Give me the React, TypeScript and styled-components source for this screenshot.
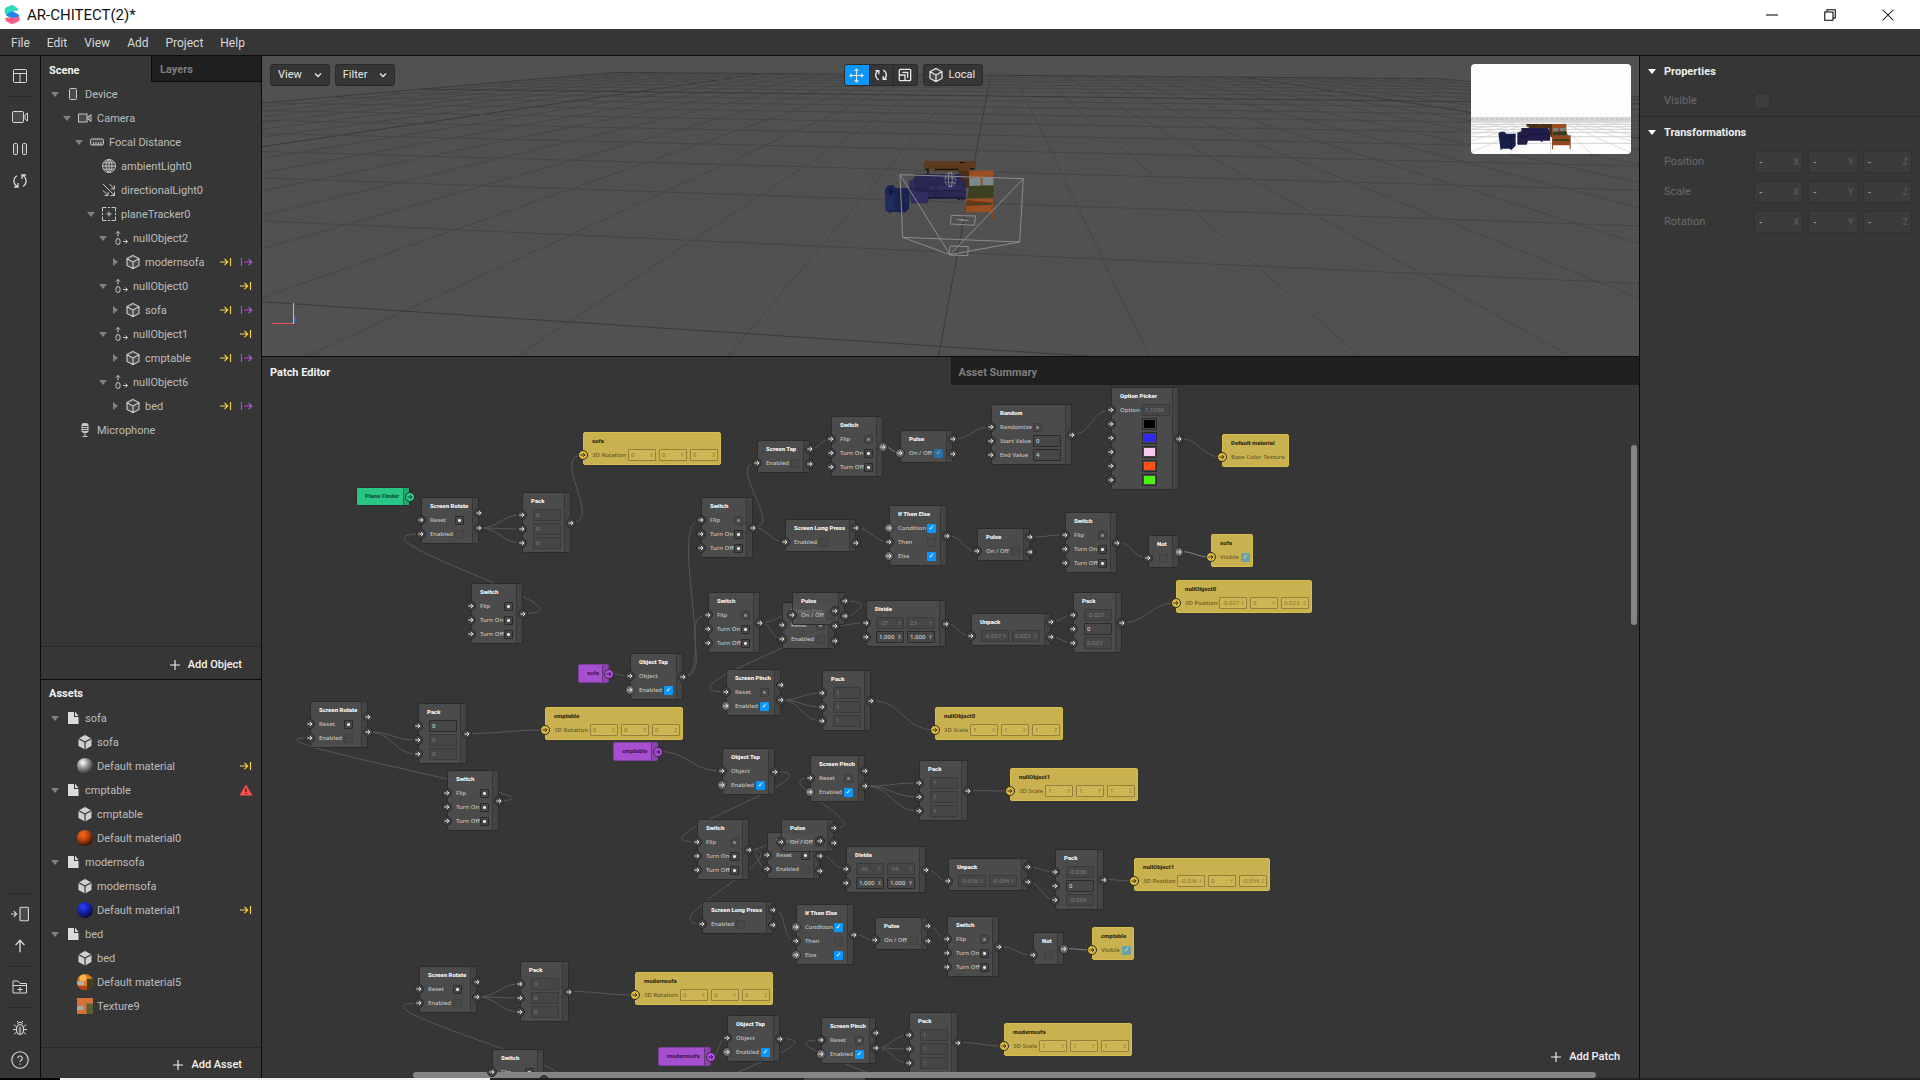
import React from "react";
import styled, { createGlobalStyle } from "styled-components";

const GlobalStyle = createGlobalStyle`
  * { box-sizing: border-box; }
  body { margin: 0; background: #363636; }
  button, input { font: inherit; color: inherit; margin: 0; padding: 0; }
  button { background: none; border: 0; cursor: pointer; }
`;

const c = {
  panel: "#363636",
  dark: "#1f1f1f",
  line: "#0c0c0c",
  soft: "#292929",
  text: "#bdbdbd",
  bright: "#ececec",
  dim: "#6b6b6b",
  yellow: "#f7cf46",
  purple: "#b04fe0",
  blue: "#0a96ff",
};

/* ---------- shell ---------- */

const Shell = styled.div`
  display: flex;
  flex-direction: column;
  height: 100vh;
  overflow: hidden;
  color: ${c.text};
  font: 11px/16px Roboto, "Liberation Sans", sans-serif;
`;

const TitleBar = styled.header`
  display: flex;
  align-items: center;
  flex: none;
  height: 29px;
  padding: 0 3px 0 4px;
  background: #fff;
  color: #111;
`;

const AppTitle = styled.h1`
  flex: 1;
  margin: 0 0 0 7px;
  font: 400 15px/20px Roboto, sans-serif;
`;

const WindowButton = styled.button`
  display: grid;
  place-items: center;
  width: 58px;
  height: 29px;
  color: #000;
`;

const MenuBar = styled.nav`
  display: flex;
  align-items: center;
  flex: none;
  gap: 17px;
  height: 27px;
  padding: 2px 0 0 11px;
  border-bottom: 1px solid ${c.line};
  color: #d8d8d8;
  font-size: 12px;
`;

const Workspace = styled.div`
  display: flex;
  flex: 1;
  min-height: 0;
`;

const Rail = styled.aside`
  display: flex;
  flex-direction: column;
  align-items: center;
  flex: none;
  width: 41px;
  padding: 4px 0 2px;
  border-right: 1px solid ${c.line};
  color: #d8d8d8;
`;

const RailButton = styled.button`
  display: grid;
  place-items: center;
  width: 32px;
  height: 32px;
`;

const RailLine = styled.hr`
  width: 24px;
  margin: 4px 0;
  border: 0;
  border-top: 1px solid #2a2a2a;
`;

const Spacer = styled.div`
  flex: 1;
`;

const Sidebar = styled.aside`
  display: flex;
  flex-direction: column;
  flex: none;
  width: 221px;
  border-right: 1px solid ${c.line};
`;

const SceneSection = styled.section`
  display: flex;
  flex-direction: column;
  height: 624px;
  border-bottom: 1px solid ${c.line};
`;

const AssetSection = styled.section`
  display: flex;
  flex-direction: column;
  flex: 1;
  min-height: 0;
`;

const Tabs = styled.div`
  display: flex;
  flex: none;
  height: 26px;
`;

const Tab = styled.button<{ $on?: boolean; $grow?: boolean }>`
  flex: ${(p) => (p.$grow ? "1" : "0 0 50%")};
  padding: 3px 8px 0;
  border: solid ${c.line};
  border-width: ${(p) => (p.$on ? "0" : "0 0 1px 1px")};
  background: ${(p) => (p.$on ? c.panel : c.dark)};
  color: ${(p) => (p.$on ? "#f2f2f2" : "#7e7e7e")};
  font-weight: 700;
  text-align: left;
`;

const SectionTitle = styled.h2`
  margin: 0;
  padding: 6px 8px 4px;
  color: #f2f2f2;
  font: 700 11px/16px Roboto, sans-serif;
`;

const List = styled.ul`
  flex: 1;
  margin: 0;
  padding: 0;
  list-style: none;
`;

const Row = styled.li<{ $depth: number }>`
  display: flex;
  align-items: center;
  height: 24px;
  padding: 0 8px 0 ${(p) => 8 + 12 * p.$depth}px;
`;

const Caret = styled.button<{ $open?: boolean }>`
  display: grid;
  place-items: center;
  width: 12px;
  height: 16px;
  margin-right: 4px;
  &::before {
    content: "";
    border: 4px solid transparent;
    ${(p) =>
      p.$open
        ? "border-top: 5px solid #808080; border-bottom: 0;"
        : "border-left: 5px solid #808080; border-right: 0;"}
  }
`;

const CaretGap = styled.span`
  width: 16px;
`;

const IconBox = styled.span`
  display: grid;
  place-items: center;
  width: 16px;
  height: 16px;
  margin-right: 4px;
  color: #c8c8c8;
`;

const Name = styled.span`
  flex: 1;
  padding-top: 2px;
  white-space: nowrap;
`;

const Marks = styled.span`
  display: flex;
  gap: 6px;
`;

const AddRow = styled.div<{ $tall?: boolean }>`
  display: flex;
  justify-content: flex-end;
  flex: none;
  height: ${(p) => (p.$tall ? 33 : 31)}px;
  padding: 3px 19px 0 0;
  border-top: 1px solid ${c.soft};
`;

const AddButton = styled.button`
  display: flex;
  align-items: center;
  gap: 8px;
  color: #f4f4f4;
  font-weight: 500;
`;

/* ---------- viewport ---------- */

const Center = styled.main`
  display: flex;
  flex-direction: column;
  flex: 1;
  min-width: 0;
`;

const Viewport = styled.section`
  position: relative;
  flex: none;
  height: 301px;
  overflow: hidden;
  border-bottom: 1px solid ${c.line};
  background: #515151;
`;

const SceneSvg = styled.svg`
  display: block;
  width: 100%;
  height: 100%;
`;

const Overlay = styled.div`
  position: absolute;
  inset: 8px;
  display: grid;
  grid-template-columns: calc(50% - 107px) auto 1fr auto;
  align-items: start;
  pointer-events: none;
`;

const Group = styled.div<{ $gap: number }>`
  display: flex;
  gap: ${(p) => p.$gap}px;
`;

const Drop = styled.button<{ $gap?: number }>`
  display: flex;
  align-items: center;
  gap: ${(p) => p.$gap ?? 12}px;
  height: 22px;
  padding: 0 7px 0 ${(p) => (p.$gap ? 4 : 7)}px;
  border: 1px solid #2a2a2a;
  border-radius: 3px;
  background: ${c.panel};
  color: #e8e8e8;
`;

const Tools = styled.div`
  display: flex;
  height: 22px;
  border: 1px solid #2a2a2a;
  border-radius: 3px;
  overflow: hidden;
  background: ${c.panel};
`;

const Tool = styled.button<{ $on?: boolean }>`
  display: grid;
  place-items: center;
  width: 24px;
  background: ${(p) => (p.$on ? c.blue : c.panel)};
  color: #e8e8e8;
  & + & {
    border-left: 1px solid #2a2a2a;
  }
`;

const Preview = styled.svg`
  grid-column: 4;
  width: 160px;
  height: 90px;
  border-radius: 4px;
  background: #fdfdfd;
`;

/* ---------- properties ---------- */

const Properties = styled.aside`
  flex: none;
  width: 281px;
  border-left: 1px solid ${c.line};
`;

const PropSection = styled.section`
  & + & {
    border-top: 1px solid #2b2b2b;
  }
`;

const PropTitle = styled.button`
  display: flex;
  align-items: center;
  gap: 8px;
  height: 30px;
  padding: 1px 0 0 8px;
  color: #ededed;
  font-weight: 700;
  &::before {
    content: "";
    border: 4px solid transparent;
    border-top: 5px solid #fff;
    border-bottom: 0;
  }
`;

const PropRow = styled.div`
  display: grid;
  grid-template-columns: 90px 1fr;
  align-items: center;
  height: 30px;
  padding: 0 8px 0 24px;
  color: ${c.dim};
`;

const PropFields = styled.div`
  display: grid;
  grid-template-columns: repeat(3, minmax(0, 1fr));
  gap: 5px;
`;

const PropField = styled.span`
  display: flex;
  align-items: center;
  height: 22px;
  padding: 0 3px 0 4px;
  border: 1px solid #303030;
  border-radius: 2px;
  background: #3b3b3b;
  color: #555;
  font-size: 9px;
  font-weight: 700;
`;

const PropInput = styled.input`
  flex: 1;
  width: 0;
  min-width: 0;
  border: 0;
  outline: 0;
  background: none;
  color: #9a9a9a;
`;

const PropCheck = styled.input`
  appearance: none;
  width: 16px;
  height: 16px;
  border: 1px solid #303030;
  border-radius: 3px;
  background: #3d3d3d;
`;

/* ---------- patch editor ---------- */

const Editor = styled.section`
  position: relative;
  flex: 1;
  min-height: 0;
  overflow: hidden;
`;

const EditorTabs = styled(Tabs)`
  height: 28px;
  & > button {
    border: 0;
  }
`;

const Wires = styled.svg`
  position: absolute;
  inset: 0;
  width: 100%;
  height: 100%;
  fill: none;
`;

type Tone = "grey" | "yellow" | "green" | "purple";

const tones = {
  grey: { body: "rgba(80,80,80,.82)", strip: "rgba(68,68,68,.9)", edge: "#2c2c2c", title: "#f4f4f4", text: "#c4c4c4", port: "#414141", arrow: "#e6e6e6" },
  yellow: { body: "#c9b150", strip: "#c9b150", edge: "#d8bd4e", title: "#352f14", text: "#665924", port: "#dbb93a", arrow: "#3a3418" },
  green: { body: "#28c584", strip: "#22a971", edge: "#2a2f2c", title: "#10543a", text: "#10543a", port: "#28cf8a", arrow: "#10402d" },
  purple: { body: "#a650cf", strip: "#8f43b3", edge: "#7e3d9c", title: "#45185b", text: "#45185b", port: "#b44fe4", arrow: "#36104a" },
};

const NodeBox = styled.article<{ $tone: Tone }>`
  position: absolute;
  display: flex;
  border: 1px solid ${(p) => tones[p.$tone].edge};
  border-radius: 2px;
  background: ${(p) => tones[p.$tone].body};
  color: ${(p) => tones[p.$tone].text};
  font: 500 6px/14px "Noto Sans", sans-serif;
  white-space: nowrap;
`;

const NodeBody = styled.div`
  flex: 1;
  min-width: 0;
  padding: 1px 0 2px;
`;

const NodeTitle = styled.h3<{ $tone: Tone }>`
  margin: 0;
  padding-left: 8px;
  color: ${(p) => tones[p.$tone].title};
  font: 900 6px/14px Roboto, sans-serif;
`;

const NodeRow = styled.div`
  display: flex;
  align-items: center;
  height: 14px;
`;

const NodeLabel = styled.label<{ $w: number }>`
  flex: none;
  width: ${(p) => p.$w}px;
  margin-left: 4px;
`;

const Strip = styled.div<{ $tone: Tone }>`
  display: flex;
  flex-direction: column;
  align-items: flex-end;
  justify-content: center;
  flex: none;
  gap: 5px;
  width: 6px;
  border-left: 1px solid rgba(30, 30, 30, 0.35);
  background: ${(p) => tones[p.$tone].strip};
`;

const Port = styled.span<{ $tone: Tone; $lit?: boolean; $out?: boolean }>`
  z-index: 1;
  display: grid;
  place-items: center;
  flex: none;
  width: 10px;
  height: 10px;
  margin: ${(p) => (p.$out ? "0 -6px 0 0" : "0 0 0 -6px")};
  border: 1px solid #2a2a2a;
  border-radius: 50%;
  background: ${(p) => (p.$lit && p.$tone === "grey" ? "#686868" : tones[p.$tone].port)};
  color: ${(p) => tones[p.$tone].arrow};
`;

const Trigger = styled.button<{ $dim?: boolean }>`
  width: 9px;
  height: 9px;
  border: 1px solid ${(p) => (p.$dim ? "#3c3c3c" : "#2a2a2a")};
  border-radius: 1px;
  background: radial-gradient(circle, ${(p) => (p.$dim ? "#8a8a8a" : "#ececec")} 0 1px, #464646 2px);
`;

const Check = styled.input<{ $fade?: boolean }>`
  appearance: none;
  width: 9px;
  height: 9px;
  border: 1px solid ${(p) => (p.checked ? "transparent" : "#404040")};
  border-radius: 1px;
  background: ${(p) => (p.checked ? c.blue : "#484848")};
  opacity: ${(p) => (p.$fade ? 0.5 : 1)};
  &:checked::before {
    content: "✓";
    display: block;
    color: #fff;
    font: 700 7px/7px "DejaVu Sans", sans-serif;
    text-align: center;
  }
`;

const Fields = styled.span`
  display: flex;
  gap: 3px;
`;

const Field = styled.span<{ $look: "live" | "off" | "gold" }>`
  display: flex;
  align-items: center;
  width: 28px;
  height: 12px;
  padding: 0 2px;
  border: 1px solid ${(p) => ({ live: "#2b2b2b", off: "#3a3a3a", gold: "#93803a" })[p.$look]};
  border-radius: 1px;
  background: ${(p) => ({ live: "#474747", off: "#464646", gold: "#cfb655" })[p.$look]};
  color: ${(p) => ({ live: "#d0d0d0", off: "#7a7a7a", gold: "#8f7c38" })[p.$look]};
`;

const FieldInput = styled.input`
  flex: 1;
  width: 0;
  min-width: 0;
  height: 10px;
  border: 0;
  outline: 0;
  background: none;
`;

const Axis = styled.small`
  font-size: 5px;
  opacity: 0.8;
`;

const Swatch = styled.button<{ $color: string }>`
  width: 15px;
  height: 12px;
  border: 1px solid #2b2b2b;
  background: ${(p) => p.$color};
  box-shadow: inset 0 0 0 1px #484848;
`;

const AddPatch = styled.div`
  position: absolute;
  right: 19px;
  bottom: 13px;
`;

const ScrollY = styled.div`
  position: absolute;
  top: 88px;
  right: 2px;
  width: 6px;
  height: 180px;
  border-radius: 3px;
  background: #858585;
`;

const ScrollX = styled.div`
  position: absolute;
  left: 151px;
  right: 43px;
  bottom: 0;
  height: 6px;
  border-radius: 3px;
  background: #858585;
`;

const BottomEdge = styled.footer`
  display: grid;
  grid-template-columns: 60px 430px 314px 61px 1fr;
  flex: none;
  height: 2px;
  background: #222;
`;

const EdgePiece = styled.span<{ $color: string }>`
  background: ${(p) => p.$color};
`;

/* ---------- icons ---------- */

const Svg = ({ s = 16, w = 1, children }: { s?: number; w?: number; children: React.ReactNode }) => (
  <svg width={s} height={s} viewBox="0 0 16 16" fill="none" stroke="currentColor" strokeWidth={w} aria-hidden="true">
    {children}
  </svg>
);

const icons: Record<string, React.ReactNode> = {
  phone: <Svg><rect x="4.5" y="2.5" width="7" height="11" rx="1" fill="#4a4a4a" /></Svg>,
  camera: <Svg><rect x="1.5" y="4" width="8.500" height="8" fill="#4a4a4a" /><path d="M10 7.500l2-1.500v4l-2-1.500M12 6l2-1.500v7L12 10" /></Svg>,
  ruler: <Svg><rect x="1.500" y="5" width="13" height="6" rx="1.500" fill="#4a4a4a" /><path d="M4.500 11V8.500M7 11V8M9.500 11V8.500M12 11V8" /></Svg>,
  globe: <Svg><circle cx="8" cy="8" r="6.500" /><ellipse cx="8" cy="8" rx="3" ry="6.500" /><path d="M8 1.500v13M1.500 8h13M2.500 4.800h11M2.500 11.200h11" /></Svg>,
  directional: <Svg><path d="M2 2l11.500 11.500M9.500 13.500h4v-4M8.500 2l5 5M13.500 3.500V7H10M2 8.500l5 5M7 10v3.500H3.500" /></Svg>,
  tracker: <Svg><path d="M5.500 1.500h-4v4M10.500 1.500h4v4M5.500 14.500h-4v-4M10.500 14.500h4v-4M8 5.500v5M5.500 8h5M7 1.500h2M7 14.500h2M1.500 7v2M14.500 7v2" /></Svg>,
  nullobj: <Svg><rect x="3" y="8.500" width="4" height="6" rx="2" /><path d="M5 6.500v-5M3 3.500l2-2 2 2M10 11.500h4.500M12.500 9.500l2 2-2 2" /></Svg>,
  cube: <Svg w={1.2}><path d="M8 1.500l6 3v7l-6 3-6-3v-7zM2 4.500l6 3.500 6-3.500M8 8v6.500" fill="#4a4a4a" /></Svg>,
  solid: <Svg><path d="M8 1l6.500 3.500v7.500L8 15.500 1.500 12V4.500z" fill="#cfcfcf" stroke="none" /><path d="M1.500 4.500L8 8l6.500-3.500M8 8v7.500" stroke="#363636" strokeWidth="1.200" /></Svg>,
  mic: <Svg><rect x="5" y="1.500" width="6" height="9" rx="1.500" fill="#cfcfcf" /><path d="M5.500 4.500h5M5.500 6.500h5M5.500 8.500h5" stroke="#363636" /><path d="M8 11v3.500M5.500 14.500h5" /></Svg>,
  file: <Svg><path d="M3 2h6v5h4.500v7H3z" fill="#dadada" stroke="none" /><path d="M10 1.500l3.500 4.500H10z" fill="#dadada" stroke="none" /></Svg>,
  grey: <Ball id="bg" a="#fff" b="#8d8d8d" d="#2a2a2a" />,
  orange: <Ball id="bo" a="#ff6b1c" b="#b8440c" d="#2a1006" />,
  blue: <Ball id="bb" a="#2c41ff" b="#1522a8" d="#070b3a" />,
  mixed: (
    <svg width="16" height="16" viewBox="0 0 16 16" aria-hidden="true">
      <defs><clipPath id="mx"><circle cx="8" cy="8" r="8" /></clipPath></defs>
      <g clipPath="url(#mx)">
        <rect width="16" height="16" fill="#d9772b" /><circle cx="6" cy="4" r="3.500" fill="#f7b64a" />
        <rect y="7.500" width="7" height="3.500" fill="#a9b3b0" /><rect x="10" y="5" width="6" height="11" fill="#3d3f16" />
        <path d="M0 12h10v4H0z" fill="#b8431a" />
      </g>
    </svg>
  ),
  texture: (
    <svg width="16" height="16" viewBox="0 0 16 16" aria-hidden="true">
      <rect width="16" height="16" fill="#d4723a" /><rect x="9.500" y="5.500" width="6.500" height="10.500" fill="#5a6130" />
      <path d="M0 8h6.500v4H0z" fill="#a3aaa2" />
    </svg>
  ),
  toYellow: <svg width="14" height="10" viewBox="0 0 14 10" fill="none" stroke={c.yellow} strokeWidth="1.2" aria-hidden="true"><path d="M1 5h7.500M5.500 1.800L8.700 5 5.500 8.200M11.500 1v8" /></svg>,
  fromPurple: <svg width="14" height="10" viewBox="0 0 14 10" fill="none" stroke={c.purple} strokeWidth="1.2" aria-hidden="true"><path d="M2.500 1v8M5 5h7.500M9.500 1.800L12.700 5 9.500 8.200" /></svg>,
  warn: <svg width="14" height="12" viewBox="0 0 14 12" aria-hidden="true"><path d="M7 0.500l6.500 11H.5z" fill="#ff5050" /><path d="M7 4v4M7 9v1.300" stroke="#5a1616" strokeWidth="1.400" /></svg>,
};

function Ball({ id, a, b, d }: { id: string; a: string; b: string; d: string }) {
  return (
    <svg width="16" height="16" viewBox="0 0 16 16" aria-hidden="true">
      <defs>
        <radialGradient id={id} cx=".36" cy=".28" r=".75">
          <stop offset="0" stopColor={a} /><stop offset=".5" stopColor={b} /><stop offset="1" stopColor={d} />
        </radialGradient>
      </defs>
      <circle cx="8" cy="8" r="8" fill={`url(#${id})`} />
    </svg>
  );
}

const Plus = () => <Svg s={10} w={1.8}><path d="M8 0v16M0 8h16" /></Svg>;
const Chevron = () => <Svg s={8} w={2.6}><path d="M2 5l6 6 6-6" /></Svg>;
const PortArrow = () => <Svg s={6} w={2.6}><path d="M1 8h12M8 3l5.500 5L8 13" /></Svg>;

/* ---------- tree data ---------- */

type Item = { d: number; icon: string; name: string; caret?: "open" | "closed"; marks?: string[] };

const both = ["toYellow", "fromPurple"];
const scene: Item[] = [
  { d: 0, icon: "phone", name: "Device", caret: "open" },
  { d: 1, icon: "camera", name: "Camera", caret: "open" },
  { d: 2, icon: "ruler", name: "Focal Distance", caret: "open" },
  { d: 3, icon: "globe", name: "ambientLight0" },
  { d: 3, icon: "directional", name: "directionalLight0" },
  { d: 3, icon: "tracker", name: "planeTracker0", caret: "open" },
  { d: 4, icon: "nullobj", name: "nullObject2", caret: "open" },
  { d: 5, icon: "cube", name: "modernsofa", caret: "closed", marks: both },
  { d: 4, icon: "nullobj", name: "nullObject0", caret: "open", marks: ["toYellow"] },
  { d: 5, icon: "cube", name: "sofa", caret: "closed", marks: both },
  { d: 4, icon: "nullobj", name: "nullObject1", caret: "open", marks: ["toYellow"] },
  { d: 5, icon: "cube", name: "cmptable", caret: "closed", marks: both },
  { d: 4, icon: "nullobj", name: "nullObject6", caret: "open" },
  { d: 5, icon: "cube", name: "bed", caret: "closed", marks: both },
  { d: 1, icon: "mic", name: "Microphone" },
];

const assets: Item[] = [
  { d: 0, icon: "file", name: "sofa", caret: "open" },
  { d: 1, icon: "solid", name: "sofa" },
  { d: 1, icon: "grey", name: "Default material", marks: ["toYellow"] },
  { d: 0, icon: "file", name: "cmptable", caret: "open", marks: ["warn"] },
  { d: 1, icon: "solid", name: "cmptable" },
  { d: 1, icon: "orange", name: "Default material0" },
  { d: 0, icon: "file", name: "modernsofa", caret: "open" },
  { d: 1, icon: "solid", name: "modernsofa" },
  { d: 1, icon: "blue", name: "Default material1", marks: ["toYellow"] },
  { d: 0, icon: "file", name: "bed", caret: "open" },
  { d: 1, icon: "solid", name: "bed" },
  { d: 1, icon: "mixed", name: "Default material5" },
  { d: 1, icon: "texture", name: "Texture9" },
];

const Tree = ({ items }: { items: Item[] }) => (
  <List>
    {items.map((it, i) => (
      <Row key={i} $depth={it.d}>
        {it.caret ? <Caret $open={it.caret === "open"} aria-label={`Toggle ${it.name}`} /> : <CaretGap />}
        <IconBox>{icons[it.icon]}</IconBox>
        <Name>{it.name}</Name>
        <Marks>{it.marks?.map((m) => <React.Fragment key={m}>{icons[m]}</React.Fragment>)}</Marks>
      </Row>
    ))}
  </List>
);

/* ---------- patch graph data ---------- */

type Control =
  | { k: "btn"; dim?: boolean }
  | { k: "check"; on?: boolean; fade?: boolean }
  | { k: "fields"; look: "live" | "off" | "gold"; v: string[]; axes?: string }
  | { k: "swatch"; color: string };
type NRow = { label?: string; ctl?: Control; lit?: boolean };
type PNode = { x: number; y: number; w: number; title: string; tone?: Tone; rows: NRow[]; outs: number; at: number; litOut?: boolean };

const off = (...v: string[]): Control => ({ k: "fields", look: "off", v });
const live = (...v: string[]): Control => ({ k: "fields", look: "live", v });
const tick: Control = { k: "check", on: true };
const empty: Control = { k: "check" };

const rotate = (x: number, y: number): PNode => ({
  x, y, w: 58, title: "Screen Rotate", outs: 2, at: 34,
  rows: [{ label: "Reset", ctl: { k: "btn" } }, { label: "Enabled", ctl: empty }],
});
const pack = (x: number, y: number, a: Control, b: Control, d: Control): PNode => ({
  x, y, w: 49, title: "Pack", outs: 1, at: 11, rows: [{ ctl: a }, { ctl: b }, { ctl: d }],
});
const toggle = (x: number, y: number, dim = true, litOut = false): PNode => ({
  x, y, w: 52, title: "Switch", outs: 1, at: 33, litOut,
  rows: [{ label: "Flip", ctl: { k: "btn", dim } }, { label: "Turn On", ctl: { k: "btn" } }, { label: "Turn Off", ctl: { k: "btn" } }],
});
const pulse = (x: number, y: number, on = false): PNode => ({
  x, y, w: 53, title: "Pulse", outs: 2, at: 34, rows: [{ label: "On / Off", ctl: { k: "check", on, fade: on }, lit: on }],
});
const tap = (x: number, y: number): PNode => ({
  x, y, w: 53, title: "Object Tap", outs: 1, at: 34, rows: [{ label: "Object" }, { label: "Enabled", ctl: tick, lit: true }],
});
const pinch = (x: number, y: number): PNode => ({
  x, y, w: 55, title: "Screen Pinch", outs: 2, at: 34,
  rows: [{ label: "Reset", ctl: { k: "btn", dim: true } }, { label: "Enabled", ctl: tick, lit: true }],
});
const pan = (x: number, y: number, dim: boolean): PNode => ({
  x, y, w: 53, title: "Screen Pan", outs: 3, at: 34, rows: [{ label: "Reset", ctl: { k: "btn", dim } }, { label: "Enabled", ctl: empty }],
});
const press = (x: number, y: number): PNode => ({
  x, y, w: 71, title: "Screen Long Press", outs: 2, at: 34, rows: [{ label: "Enabled", ctl: empty }],
});
const branch = (x: number, y: number): PNode => ({
  x, y, w: 58, title: "If Then Else", outs: 1, at: 38,
  rows: [{ label: "Condition", ctl: tick, lit: true }, { label: "Then", ctl: empty }, { label: "Else", ctl: tick, lit: true }],
});
const divide = (x: number, y: number, a: string, b: string): PNode => ({
  x, y, w: 80, title: "Divide", outs: 1, at: 10,
  rows: [
    { ctl: { k: "fields", look: "off", v: [a, b], axes: "XY" } },
    { ctl: { k: "fields", look: "live", v: ["1,000", "1,000"], axes: "XY" } },
  ],
});
const unpack = (x: number, y: number, a: string, b: string): PNode => ({
  x, y, w: 80, title: "Unpack", outs: 2, at: 10, rows: [{ ctl: { k: "fields", look: "off", v: [a, b], axes: "XY" } }],
});
const not = (x: number, y: number): PNode => ({ x, y, w: 31, title: "Not", outs: 1, at: 11, litOut: true, rows: [{ ctl: empty }] });
const target = (x: number, y: number, title: string, kind: "Rotation" | "Position" | "Scale", v: string[]): PNode => ({
  x, y, title, tone: "yellow", outs: 0,
  w: { Rotation: 138, Position: 136, Scale: 128 }[kind],
  at: { Rotation: 45, Position: 43, Scale: 35 }[kind],
  rows: [{ label: `3D ${kind}`, ctl: { k: "fields", look: "gold", v, axes: "XYZ" } }],
});
const visible = (x: number, y: number, title: string): PNode => ({
  x, y, w: 42, title, tone: "yellow", outs: 0, at: 30, rows: [{ label: "Visible", ctl: { k: "check", on: true, fade: true } }],
});
const source = (x: number, y: number, w: number, title: string, tone: Tone): PNode => ({ x, y, w, title, tone, outs: 1, at: 0, rows: [] });

const nodes: Record<string, PNode> = {
  plane: source(94, 102, 54, "Plane Finder", "green"),
  rot1: rotate(159, 112),
  pack1: pack(260, 107, off("0"), off("0"), off("0")),
  sofaRot: target(321, 47, "sofa", "Rotation", ["0", "0", "0"]),
  sw1: toggle(209, 198, false),
  sofaObj: source(316, 279, 31, "sofa", "purple"),
  tap1: tap(368, 268),
  swA: toggle(439, 112),
  swB: toggle(446, 207),
  stap: { x: 495, y: 55, w: 53, title: "Screen Tap", outs: 2, at: 34, rows: [{ label: "Enabled", ctl: empty }] },
  swC: toggle(569, 31, true, true),
  pulse1: pulse(638, 45, true),
  random: {
    x: 729, y: 19, w: 81, title: "Random", outs: 1, at: 42,
    rows: [{ label: "Randomize", ctl: { k: "btn", dim: true } }, { label: "Start Value", ctl: live("0") }, { label: "End Value", ctl: live("4") }],
  },
  press1: press(523, 134),
  ite1: branch(627, 120),
  pulse2: pulse(715, 143),
  swD: toggle(803, 127),
  not1: not(886, 150),
  sofaVis: visible(949, 149, "sofa"),
  pos0: target(914, 195, "nullObject0", "Position", ["-0.027", "0", "0.023"]),
  material: { x: 960, y: 49, w: 67, title: "Default material", tone: "yellow", outs: 0, at: 30, rows: [{ label: "Base Color Texture" }] },
  option: {
    x: 849, y: 2, w: 68, title: "Option Picker", outs: 1, at: 31,
    rows: [{ label: "Option", ctl: off("1.1256") }, ...["#000", "#3029f0", "#f7c9ee", "#ff5214", "#4ff512"].map((color) => ({ ctl: { k: "swatch" as const, color } }))],
  },
  pack3: pack(811, 207, off("-0.027"), live("0"), off("0.023")),
  unpack1: unpack(709, 228, "-0.027", "0.023"),
  div1: divide(604, 215, "-27", "23"),
  pan1: pan(520, 217, true),
  pulse3: pulse(530, 207),
  pinch1: pinch(464, 284),
  pack4: pack(560, 285, off("1"), off("1"), off("1")),
  rot2: rotate(48, 316),
  pack2: pack(156, 318, live("0"), off("0"), off("0")),
  sw2: toggle(185, 385, false),
  cmpRot: target(283, 322, "cmptable", "Rotation", ["0", "0", "0"]),
  cmpObj: source(351, 357, 45, "cmptable", "purple"),
  scale0: target(673, 322, "nullObject0", "Scale", ["1", "1", "1"]),
  tap2: tap(460, 363),
  pinch2: pinch(548, 370),
  pack5: pack(657, 375, off("1"), off("1"), off("1")),
  scale1: target(748, 383, "nullObject1", "Scale", ["1", "1", "1"]),
  swF: toggle(435, 434),
  pan2: pan(505, 447, false),
  pulse4: pulse(519, 434),
  div2: divide(584, 461, "-36", "-54"),
  unpack2: unpack(686, 473, "-0.036", "-0.054"),
  pack6: pack(793, 464, off("-0.036"), live("0"), off("-0.054")),
  pos1: target(872, 473, "nullObject1", "Position", ["-0.036", "0", "-0.054"]),
  press2: press(440, 516),
  ite2: branch(534, 519),
  pulse5: pulse(613, 532),
  swG: toggle(685, 531),
  not2: not(771, 547),
  cmpVis: visible(830, 542, "cmptable"),
  rot3: rotate(157, 581),
  pack7: pack(258, 576, off("0"), off("0"), off("0")),
  sw3: toggle(230, 664, false),
  modRot: target(373, 587, "modernsofa", "Rotation", ["0", "0", "0"]),
  modObj: source(396, 662, 53, "modernsofa", "purple"),
  tap3: tap(465, 630),
  pinch3: pinch(559, 632),
  pack8: pack(647, 627, off("1"), off("1"), off("1")),
  modScale: target(742, 638, "modernsofa", "Scale", ["1", "1", "1"]),
};

/* node, output index, node, input index; bare points run past the visible area */
type End = [string, number] | { x: number; y: number };
const links: [End, End, boolean?][] = [
  [["sw1", 0], ["rot1", 1]],
  [["rot1", 1], ["pack1", 0]], [["rot1", 1], ["pack1", 1]], [["rot1", 1], ["pack1", 2]],
  [["pack1", 0], ["sofaRot", 0]],
  [["sofaObj", 0], ["tap1", 0]],
  [["tap1", 0], ["swA", 0]], [["tap1", 0], ["swB", 0]],
  [["swA", 0], ["stap", 0]], [["swA", 0], ["press1", 0]],
  [["stap", 0], ["swC", 0]], [["swC", 0], ["pulse1", 0], true],
  [["pulse1", 0], ["random", 0]], [["random", 0], ["option", 0]], [["option", 0], ["material", 0]],
  [["press1", 0], ["ite1", 1]], [["ite1", 0], ["pulse2", 0]], [["pulse2", 0], ["swD", 0]],
  [["swD", 0], ["not1", 0]], [["not1", 0], ["sofaVis", 0], true],
  [["swB", 0], ["pulse3", 0]], [["swB", 0], ["pan1", 1]],
  [["pulse3", 0], ["pinch1", 0]], [["pan1", 1], ["div1", 0]], [["div1", 0], ["unpack1", 0]],
  [["unpack1", 0], ["pack3", 0]], [["unpack1", 1], ["pack3", 2]], [["pack3", 0], ["pos0", 0]],
  [["pinch1", 1], ["pack4", 0]], [["pinch1", 1], ["pack4", 1]], [["pinch1", 1], ["pack4", 2]], [["pack4", 0], ["scale0", 0]],
  [["sw2", 0], ["rot2", 1]], [["rot2", 1], ["pack2", 1]], [["rot2", 1], ["pack2", 2]], [["pack2", 0], ["cmpRot", 0]],
  [["cmpObj", 0], ["tap2", 0]], [["tap2", 0], ["swF", 0]],
  [["swF", 0], ["pulse4", 0]], [["swF", 0], ["pan2", 1]], [["swF", 0], ["press2", 0]],
  [["pulse4", 0], ["pinch2", 0]],
  [["pinch2", 1], ["pack5", 0]], [["pinch2", 1], ["pack5", 1]], [["pinch2", 1], ["pack5", 2]], [["pack5", 0], ["scale1", 0]],
  [["pan2", 1], ["div2", 0]], [["div2", 0], ["unpack2", 0]],
  [["unpack2", 0], ["pack6", 0]], [["unpack2", 1], ["pack6", 2]], [["pack6", 0], ["pos1", 0]],
  [["press2", 0], ["ite2", 1]], [["ite2", 0], ["pulse5", 0]], [["pulse5", 0], ["swG", 0]],
  [["swG", 0], ["not2", 0]], [["not2", 0], ["cmpVis", 0], true],
  [["sw3", 0], ["rot3", 1]],
  [["rot3", 1], ["pack7", 0]], [["rot3", 1], ["pack7", 1]], [["rot3", 1], ["pack7", 2]], [["pack7", 0], ["modRot", 0]],
  [["modObj", 0], ["tap3", 0]], [["tap3", 0], { x: 440, y: 718 }], [{ x: 636, y: 714 }, ["pinch3", 0]],
  [["pinch3", 1], ["pack8", 0]], [["pinch3", 1], ["pack8", 1]], [["pinch3", 1], ["pack8", 2]], [["pack8", 0], ["modScale", 0]],
];

const heightOf = (n: PNode) => 19 + 14 * n.rows.length;

function outPoint(e: End) {
  if (!Array.isArray(e)) return e;
  const n = nodes[e[0]];
  return { x: n.x + n.w, y: n.y + heightOf(n) / 2 + (e[1] - (n.outs - 1) / 2) * 15 };
}
function inPoint(e: End) {
  if (!Array.isArray(e)) return e;
  const n = nodes[e[0]];
  return { x: n.x, y: n.y + 23 + 14 * e[1] };
}
function wirePath(a: End, b: End) {
  const p = outPoint(a);
  const q = inPoint(b);
  const dx = q.x - p.x;
  const dy = Math.abs(q.y - p.y);
  const bend = dx > 0 ? Math.max(dx / 2, Math.min(34, dy / 2)) : Math.min(86, 30 - 0.55 * dx);
  return `M${p.x} ${p.y}C${p.x + bend} ${p.y} ${q.x - bend} ${q.y} ${q.x} ${q.y}`;
}

function ControlView({ ctl, id, name }: { ctl: Control; id: string; name: string }) {
  if (ctl.k === "btn") return <Trigger id={id} $dim={ctl.dim} aria-label={name} />;
  if (ctl.k === "check") return <Check id={id} type="checkbox" checked={!!ctl.on} readOnly $fade={ctl.fade} aria-label={name} />;
  if (ctl.k === "swatch") return <Swatch id={id} $color={ctl.color} aria-label={name} />;
  return (
    <Fields>
      {ctl.v.map((v, i) => (
        <Field key={i} $look={ctl.look}>
          <FieldInput id={i ? undefined : id} defaultValue={v} aria-label={`${name} ${ctl.axes?.[i] ?? ""}`} />
          {ctl.axes && <Axis>{ctl.axes[i]}</Axis>}
        </Field>
      ))}
    </Fields>
  );
}

function NodeView({ id, n }: { id: string; n: PNode }) {
  const tone = n.tone ?? "grey";
  return (
    <NodeBox $tone={tone} style={{ left: n.x, top: n.y, width: n.w, height: heightOf(n) }}>
      <NodeBody>
        <NodeTitle $tone={tone}>{n.title}</NodeTitle>
        {n.rows.map((r, i) => (
          <NodeRow key={i}>
            <Port $tone={tone} $lit={r.lit}><PortArrow /></Port>
            <NodeLabel $w={n.at - 9} htmlFor={r.ctl ? `${id}-${i}` : undefined}>{r.label}</NodeLabel>
            {r.ctl && <ControlView ctl={r.ctl} id={`${id}-${i}`} name={r.label ?? n.title} />}
          </NodeRow>
        ))}
      </NodeBody>
      {n.outs > 0 && (
        <Strip $tone={tone}>
          {Array.from({ length: n.outs }, (_, i) => (
            <Port key={i} $out $tone={tone} $lit={n.litOut}><PortArrow /></Port>
          ))}
        </Strip>
      )}
    </NodeBox>
  );
}

const GraphLayer = styled.div`
  position: absolute;
  inset: 28px 0 0;
  overflow: hidden;
`;

/* ---------- 3D scene ---------- */

function floorLines() {
  const span = 17;
  const top = -17;
  const out: { d: string; major: boolean }[] = [];
  const slope = (k: number) => (-58.6 + 210.4 * k) / 316.7;
  for (let k = -span; k <= span; k++) {
    const m = slope(k);
    const u = 36.32 / (1 - 0.007683 * m);
    out.push({ d: `M${735.2 + u * m} ${u + top}L${735.2 + 600 * m} ${600 + top}`, major: k % 10 === 0 || Math.abs(k) === span });
  }
  for (let j = 0; j <= span; j++) {
    const depth = 1 / (0.003172 + 0.001412 * j);
    const at = (m: number) => {
      const u = (depth * 0.98689) / (1 - (depth * m) / 4790);
      return `${735.2 + u * m} ${u + top}`;
    };
    const left = slope(-span);
    const right = slope(span);
    out.push({ d: `M${at(left)}L${at(right)}`, major: j % 10 === 0 || j === span });
  }
  return out;
}

const SceneView = () => (
  <SceneSvg viewBox="0 0 1377 300" preserveAspectRatio="xMidYMin slice" role="img" aria-label="Scene">
    <g fill="none" strokeWidth="1">
      {floorLines().map((l, i) => (
        <path key={i} d={l.d} stroke={l.major ? "#3a3a3a" : "#464646"} />
      ))}
    </g>
    <g transform="translate(578 0) scale(.33333)">
      <path d="M250 325l10-13 10 4h138v18l-12 4v8h-18v50l-12 0-10-50h-75v-8l-28 4z" fill="#5c3a1e" />
      <path d="M256 338h10v18h-4v-14h-6zM285 338h70v4h-70zM360 318h14v3h-14zM390 336h14v4h-14z" fill="#15100c" />
      <path d="M355 345h33v50h-20z" fill="#4a2f1b" />
      <path d="M388 345l73-3v24l-73 4z" fill="#9a4e22" />
      <path d="M388 366h72v24h-72z" fill="#7b8b8b" />
      <path d="M422 366h6v24h-6z" fill="#9a4e22" />
      <path d="M388 390l73-2-1 38-76 3z" fill="#3c4020" />
      <path d="M376 428l83-1v24l-5 18h-75z" fill="#9a4e22" />
      <path d="M380 432l75 8v6l-75 4z" fill="#6e3417" /><path d="M378 442h78v5h-78z" fill="#3f431f" />
      <path d="M374 462h4v20h-4zM454 450h5v38h-5z" fill="#8d461f" />
      <path d="M207 375l14-6 5-15h136l4 18 12 4v54l-12 4-4-6h-94l-6 14h-48z" fill="#2a2752" />
      <path d="M212 378l12-6v34l-12 6zM214 408h50v30h-50zM268 390h96v12h-96z" fill="#312d60" />
      <path d="M207 396l56 10M268 404h98M288 388v36" stroke="#1c1a3c" strokeWidth="2" fill="none" />
      <path d="M262 424h110v4h-12v5h-6v-5h-90z" fill="#1a1836" />
      <path d="M135 404l4-12 8-4h14l5 8h40l3 10-2 52-12 12-12-2v4h-4v-4h-26l-3 6-4-6-9-4z" fill="#1b2450" />
      <path d="M137 410h26v52h-26z" fill="#202b5e" /><path d="M148 396l8 4v16h-8zM186 400l6 60" fill="#121938" stroke="#121938" />
      <g fill="none" stroke="#8c8c8c" strokeWidth="3">
        <path d="M180 356L550 368 539 558 188 544zM180 356L330 596 550 368M188 544L330 596 539 558" />
        <path d="M334 478l73 2-4 28-72-4zM330 570l55 2-2 27-55-2zM350 491h22M362 493h24" />
        <ellipse cx="331" cy="371" rx="16" ry="21" strokeDasharray="5 3" />
        <ellipse cx="331" cy="371" rx="6" ry="22" /><path d="M315 366h32M315 380h32" strokeDasharray="5 3" />
      </g>
    </g>
    <path d="M10 267.500H32" stroke="#ee4d56" /><path d="M31.500 247v21" stroke="#5df0a0" /><path d="M32.500 267v-3l1.500-4" stroke="#3b82f0" fill="none" />
  </SceneSvg>
);

const PreviewView = () => (
  <Preview viewBox="33 18 480 270" role="img" aria-label="Camera preview">
    <path d="M33 177h480v17H33z" fill="#d6d6d6" />
    <g stroke="#d2d2d2" strokeWidth="3" fill="none">
      {[199, 206, 214, 223, 236, 256].map((y) => <path key={y} d={`M33 ${y}h480`} />)}
      {[-14, -9, -6, -4, -3, -2, -1, 0, 1, 2, 3, 4, 6, 9, 14].map((k) => (
        <path key={k} d={`M${272 + k * 18} 194L${272 + k * 125} 288`} strokeWidth="2" />
      ))}
      <path d="M33 184h480" strokeDasharray="6 9" stroke="#bdbdbd" />
    </g>
    <path d="M198 198h84v40h-10l-6-28h-60v-4h-5z" fill="#4c3018" />
    <path d="M276 198h43v36h-43z" fill="#9a4e22" /><path d="M279 210h38v12h-38z" fill="#7b8580" /><path d="M295 210h5v12h-5z" fill="#9a4e22" />
    <path d="M278 221l40-2 6 14h-46z" fill="#3a3d1d" />
    <path d="M276 232h56v42h-3v-12h-50v12h-3z" fill="#8f4820" /><path d="M279 243h50v6h-50z" fill="#3d3f1d" />
    <path d="M184 210h80l6 12v26h-22v3h-6v-3h-38l-4 12h-28v-36l12-4z" fill="#211d48" />
    <path d="M205 229h64M174 235h32" stroke="#131131" strokeWidth="2" />
    <path d="M115 226l8-5h10l6 6h28v36l-12 12h-4l-2-3h-22l-2 3h-4v-4z" fill="#18204a" />
    <path d="M118 238h36v34M154 238l12-8" stroke="#0f1533" strokeWidth="2" fill="none" />
  </Preview>
);

/* ---------- app ---------- */

export default function App() {
  return (
    <Shell>
      <GlobalStyle />
      <TitleBar>
        <svg width="16" height="19" viewBox="0 0 48 57" aria-hidden="true">
          <path d="M2 15Q2 10 7 7L21 1Q26-1 30 2L43 11 42 17 25 18 21 27 7 29Q2 27 2 21z" fill="#2fdcb8" />
          <path d="M5 42Q1 40 4 38L24 37 44 30Q47 34 47 42 47 48 42 50L27 56Q22 58 18 55L5 48z" fill="#ff5c87" />
          <path d="M8 28L25 18 43 28Q47 31 43 35L25 39 9 34Q4 31 8 28z" fill="#1d86e8" />
          <path d="M48 16L30 20 48 29zM0 30L14 35 0 38z" fill="#fff" />
        </svg>
        <AppTitle>AR-CHITECT(2)*</AppTitle>
        <WindowButton aria-label="Minimize"><Svg s={12} w={1.4}><path d="M0 8h16" /></Svg></WindowButton>
        <WindowButton aria-label="Restore"><Svg s={12} w={1.4}><path d="M1 4h11v11H1zM4 4V1h11v11h-3" /></Svg></WindowButton>
        <WindowButton aria-label="Close"><Svg s={12} w={1.4}><path d="M1 1l14 14M15 1L1 15" /></Svg></WindowButton>
      </TitleBar>
      <MenuBar>
        {["File", "Edit", "View", "Add", "Project", "Help"].map((m) => <button key={m}>{m}</button>)}
      </MenuBar>
      <Workspace>
        <Rail>
          <RailButton aria-label="Layout"><Svg><rect x="1.500" y="1.500" width="13" height="13" rx="1" /><path d="M1.500 5.500h13M8 5.500v9" /></Svg></RailButton>
          <RailLine />
          <RailButton aria-label="Video"><Svg><rect x=".5" y="2.500" width="11" height="11" rx="1" fill="#4a4a4a" /><path d="M13 6l2.500-2v8L13 10z" /></Svg></RailButton>
          <RailButton aria-label="Pause"><Svg><rect x="1.500" y="2.500" width="4" height="11" rx="1" fill="#4a4a4a" /><rect x="10.500" y="2.500" width="4" height="11" rx="1" fill="#4a4a4a" /></Svg></RailButton>
          <RailButton aria-label="Restart"><Svg w={1.3}><path d="M5.500 13.500A6 6 0 0 1 5 2.800M10.500 2.500A6 6 0 0 1 11 13.200M2 14h4v-4M14 2h-4v4" /></Svg></RailButton>
          <Spacer />
          <RailLine />
          <RailButton aria-label="Send to device"><Svg s={18}><path d="M0 8h4M2.500 5.500L5 8l-2.500 2.500" /><rect x="8" y="2" width="7.500" height="12" rx="1" fill="#4a4a4a" /></Svg></RailButton>
          <RailButton aria-label="Upload"><Svg s={14} w={1.6}><path d="M8 15V2M3 7l5-5.500L13 7" /></Svg></RailButton>
          <RailLine />
          <RailButton aria-label="Add library"><Svg><path d="M1 14V2h5l2 2.500h6.500V14z" /><path d="M1 6.500h13.500M8 8v5M5.500 10.500h5" /></Svg></RailButton>
          <RailLine />
          <RailButton aria-label="Report a bug"><Svg><rect x="4.500" y="4.500" width="7" height="10" rx="3.500" fill="#4a4a4a" /><path d="M8 7v7M5.500 4l1-1.500h3l1 1.500M5 1l1.500 1.500M11 1L9.500 2.500M1 9.500h3.500M15 9.500h-3.500M2 4.500l2.500 2.500M14 4.500L11.500 7M2 14.500L4.500 12M14 14.500L11.500 12" /></Svg></RailButton>
          <RailButton aria-label="Help"><Svg s={18}><circle cx="8" cy="8" r="7.300" /><path d="M6 6.500a2 2 0 1 1 3 1.700c-.7.400-1 .7-1 1.500M8 11v1.300" /></Svg></RailButton>
        </Rail>
        <Sidebar>
          <SceneSection>
            <Tabs><Tab $on>Scene</Tab><Tab $grow>Layers</Tab></Tabs>
            <Tree items={scene} />
            <AddRow $tall><AddButton><Plus />Add Object</AddButton></AddRow>
          </SceneSection>
          <AssetSection>
            <SectionTitle>Assets</SectionTitle>
            <Tree items={assets} />
            <AddRow><AddButton><Plus />Add Asset</AddButton></AddRow>
          </AssetSection>
        </Sidebar>
        <Center>
          <Viewport>
            <SceneView />
            <Overlay>
              <Group $gap={5}>
                <Drop>View<Chevron /></Drop>
                <Drop>Filter<Chevron /></Drop>
              </Group>
              <Group $gap={5}>
                <Tools>
                  <Tool $on aria-label="Move"><Svg s={15} w={1.2}><path d="M8 1v14M1 8h14M6 3l2-2 2 2M6 13l2 2 2-2M3 6L1 8l2 2M13 6l2 2-2 2" /></Svg></Tool>
                  <Tool aria-label="Rotate"><Svg s={14} w={1.5}><path d="M5.500 13.500A6 6 0 0 1 5 2.800M10.500 2.500A6 6 0 0 1 11 13.200M1.500 3h4v4M14.500 13h-4V9" /></Svg></Tool>
                  <Tool aria-label="Scale"><Svg s={14} w={1.5}><rect x="1.500" y="1.500" width="13" height="13" rx="1" /><path d="M1.500 8H8v6.500M5 5h6v6" /></Svg></Tool>
                </Tools>
                <Drop $gap={5}>{icons.cube}Local</Drop>
              </Group>
              <PreviewView />
            </Overlay>
          </Viewport>
          <Editor>
            <EditorTabs><Tab $on>Patch Editor</Tab><Tab $grow>Asset Summary</Tab></EditorTabs>
            <GraphLayer>
              <Wires>
                {links.map(([a, b, lit], i) => (
                  <path key={i} d={wirePath(a, b)} stroke={lit ? "#858585" : "#585858"} />
                ))}
              </Wires>
              {Object.entries(nodes).map(([id, n]) => <NodeView key={id} id={id} n={n} />)}
            </GraphLayer>
            <AddPatch><AddButton><Plus />Add Patch</AddButton></AddPatch>
            <ScrollY />
            <ScrollX />
          </Editor>
        </Center>
        <Properties>
          <PropSection>
            <PropTitle>Properties</PropTitle>
            <PropRow>
              <label htmlFor="visible">Visible</label>
              <PropCheck id="visible" type="checkbox" />
            </PropRow>
          </PropSection>
          <PropSection>
            <PropTitle>Transformations</PropTitle>
            {["Position", "Scale", "Rotation"].map((p) => (
              <PropRow key={p}>
                <label htmlFor={`${p}-X`}>{p}</label>
                <PropFields>
                  {["X", "Y", "Z"].map((a) => (
                    <PropField key={a}>
                      <PropInput id={`${p}-${a}`} defaultValue="-" aria-label={`${p} ${a}`} />
                      {a}
                    </PropField>
                  ))}
                </PropFields>
              </PropRow>
            ))}
          </PropSection>
        </Properties>
      </Workspace>
      <BottomEdge>
        <EdgePiece $color="#050505" />
        <EdgePiece $color="#f2f2f2" />
        <EdgePiece $color="#222" />
        <EdgePiece $color="#4a4a4a" />
      </BottomEdge>
    </Shell>
  );
}
